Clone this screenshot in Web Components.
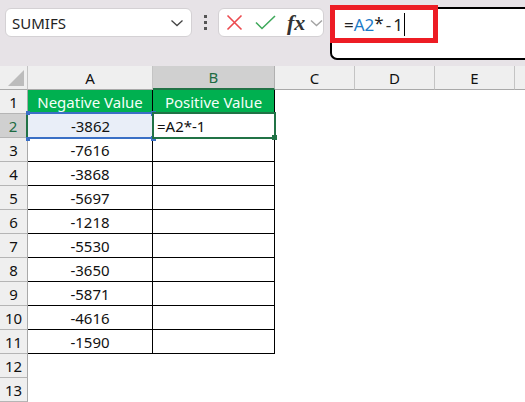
<!DOCTYPE html>
<html>
<head>
<meta charset="utf-8">
<title>SUMIFS</title>
<style>
    html, body { margin: 0; padding: 0; background: #fff; overflow: hidden; }
    body { width: 525px; height: 402px; font-family: "Noto Sans", "Open Sans", sans-serif; }
</style>
</head>
<body>
<excel-window>
    <formula-toolbar slot="toolbar" name="SUMIFS"></formula-toolbar>
    <sheet-grid slot="sheet"></sheet-grid>
</excel-window>

<template id="excel-window-template">
<style>
    :host { display: flex; flex-direction: column; width: 525px; height: 402px; overflow: hidden; }
</style>
<slot name="toolbar"></slot>
<slot name="sheet"></slot>
</template>

<template id="formula-toolbar-template">
<style>
    :host { display: flex; align-items: flex-start; box-sizing: border-box; height: 69px; padding: 8px 0 0 5px; background: #e7e3e7; position: relative; color: #222; }
    .box { background: #fff; border: 1px solid #d4d1d4; border-radius: 6px; box-sizing: border-box; height: 29px; display: flex; align-items: center; }
    .name { width: 187px; padding: 0 7px 0 6px; justify-content: space-between; font-size: 15px; }
    .dots { width: 26px; height: 29px; display: flex; flex-direction: column; align-items: center; justify-content: center; gap: 3px; }
    .dots i { width: 3px; height: 3px; background: #555; display: block; }
    .tools { width: 106px; padding-left: 7px; gap: 12px; }
    .fx { font: italic 700 22px "Liberation Serif", serif; color: #333; width: 22px; margin-left: -1px; line-height: 26px; }
    .chev { margin-left: -8px; }
    .bar { margin: -1px 0 0 6px; flex: 1; height: 53px; box-sizing: border-box; background: #fff; border: 2px solid #000; border-right: none; border-radius: 7px 0 0 7px; padding: 4px 0 0 12px; font-size: 17px; line-height: 24px; white-space: nowrap; }
    .ref { color: #1b7ac7; }
    .op { margin: 0 2px; color: #333; }
    .star { position: relative; top: -2px; }
    .caret { display: inline-block; width: 1px; height: 23px; background: #000; vertical-align: -5px; margin-left: 1px; }
    .mark { position: absolute; left: 330px; top: 5px; width: 108px; height: 38px; box-sizing: border-box; border: 5px solid #ed1c24; }
    svg { display: block; flex: none; }
</style>
<div class="box name"><span id="name"></span>
    <svg width="14" height="8" viewBox="0 0 14 8"><path d="M1.5 1.5 7 6.5 12.5 1.5" fill="none" stroke="#444" stroke-width="1.3"/></svg>
</div>
<div class="dots"><i></i><i></i><i></i></div>
<div class="box tools">
    <svg width="17" height="17" viewBox="0 0 17 17"><path d="M1.5 1.5 15.5 15.5M15.5 1.5 1.5 15.5" fill="none" stroke="#ec4a4f" stroke-width="1.6"/></svg>
    <svg width="21" height="15" viewBox="0 0 21 15"><path d="M1 7.5 7 13.5 20 1" fill="none" stroke="#3fa95b" stroke-width="1.6"/></svg>
    <span class="fx">fx</span>
    <svg class="chev" width="13" height="8" viewBox="0 0 13 8"><path d="M1 1.5 6.5 6.5 12 1.5" fill="none" stroke="#a3a3a3" stroke-width="1.4"/></svg>
</div>
<div class="bar">=<span class="ref">A2</span><span class="star">*</span><span class="op">-</span>1<span class="caret"></span></div>
<div class="mark"></div>
</template>

<template id="sheet-cell-template">
<style>
    :host { display: flex; align-items: center; justify-content: center; box-sizing: border-box; position: relative; font-size: 15px; min-width: 0; white-space: nowrap; color: #111; }
    :host([kind="col"]) { background: #efefef; border-bottom: 1px solid #a9a9a9; border-right: 1px solid #c4c4c4; }
    :host([kind="col"][active]) { background: #d0d0d0; color: #1d6b43; border-bottom: 2px solid #217346; border-right-color: #b0b0b0; }
    :host([kind="row"]) { background: #efefef; border-bottom: 1px solid #b5b5b5; border-right: 1px solid #a9a9a9; }
    :host([kind="row"][active]) { background: #d0d0d0; color: #1d6b43; border-right: 2px solid #217346; }
    :host([kind="head"]) { background: #00b050; color: #f4fff8; border-right: 1px solid #000; }
    :host([kind="data"]) { background: #fff; border-right: 1px solid #000; border-bottom: 1px solid #000; }
    :host([kind="corner"]) { background: #efefef; border-bottom: 1px solid #a9a9a9; border-right: 1px solid #c4c4c4; }
    :host([kind="blank"]) { background: #fff; }
    :host([sel="blue"]) { background: #e9eef8; border: none; z-index: 1; }
    :host([sel="green"]) { justify-content: flex-start; padding-left: 4px; border: none; z-index: 2; }
    :host([sel="green"]) .frame { display: block; position: absolute; left: -1px; top: -2px; right: -1px; bottom: -1px; border: 2px solid #217346; }
    :host([sel="blue"]) .frame { display: block; position: absolute; left: 0; top: -2px; right: 0; bottom: -1px; border-top: 2px solid #3a6fc6; border-bottom: 2px solid #3a6fc6; }
    .frame { display: none; pointer-events: none; }
    .knob { display: none; position: absolute; width: 5px; height: 5px; }
    :host([sel="green"]) .br { display: block; background: #217346; right: -2px; bottom: -2px; }
    :host([sel="blue"]) .knob { display: block; background: #3a6fc6; }
    :host([sel="blue"]) .tl { left: -2px; top: -3px; width: 4px; height: 4px; }
    :host([sel="blue"]) .bl { left: -2px; bottom: -3px; width: 4px; height: 4px; }
    :host([sel="blue"]) .tr { right: -3px; top: -3px; }
    :host([sel="blue"]) .br { right: -3px; bottom: -3px; }
    svg { display: block; }
</style>
<slot></slot>
<span class="frame"></span>
<span class="knob tl"></span><span class="knob tr"></span><span class="knob bl"></span><span class="knob br"></span>
</template>

<template id="sheet-grid-template">
<style>
    :host { display: grid; grid-template-columns: 28px 125px 122px 80px 80px 80px 50px; grid-auto-rows: 24px; background: #fff; }
</style>
<slot></slot>
</template>

<script>
const negativeValues = [-3862, -7616, -3868, -5697, -1218, -5530, -3650, -5871, -4616, -1590];

class ExcelWindow extends HTMLElement {
    constructor() {
        super();
        this.attachShadow({ mode: "open" });
    }
    connectedCallback() {
        this.shadowRoot.appendChild(document.getElementById('excel-window-template').content.cloneNode(true));
    }
}

class FormulaToolbar extends HTMLElement {
    constructor() {
        super();
        this.attachShadow({ mode: "open" });
    }
    connectedCallback() {
        const clone = document.getElementById('formula-toolbar-template').content.cloneNode(true);
        clone.querySelector('#name').textContent = this.getAttribute('name');
        this.shadowRoot.appendChild(clone);
    }
}

class SheetCell extends HTMLElement {
    constructor() {
        super();
        this.attachShadow({ mode: "open" });
    }
    connectedCallback() {
        this.shadowRoot.appendChild(document.getElementById('sheet-cell-template').content.cloneNode(true));
        if (this.getAttribute('kind') === 'corner') {
            // triangulo gris de seleccionar todo
            this.shadowRoot.querySelector('slot').innerHTML = '';
            const ns = 'http://www.w3.org/2000/svg';
            const svg = document.createElementNS(ns, 'svg');
            svg.setAttribute('width', '16');
            svg.setAttribute('height', '16');
            svg.style.cssText = 'position:absolute;left:8px;top:4px';
            const path = document.createElementNS(ns, 'path');
            path.setAttribute('d', 'M16 0V16H0Z');
            path.setAttribute('fill', '#bcbcbc');
            svg.appendChild(path);
            this.shadowRoot.appendChild(svg);
        }
    }
}

class SheetGrid extends HTMLElement {
    constructor() {
        super();
        this.attachShadow({ mode: "open" });
    }
    addCell(kind, text, extra) {
        const cell = document.createElement('sheet-cell');
        cell.setAttribute('kind', kind);
        if (text !== undefined) cell.textContent = text;
        for (const key in extra) cell.setAttribute(key, extra[key]);
        this.appendChild(cell);
    }
    connectedCallback() {
        this.shadowRoot.appendChild(document.getElementById('sheet-grid-template').content.cloneNode(true));
        this.addCell('corner');
        ['A', 'B', 'C', 'D', 'E', ''].forEach((col) => {
            this.addCell('col', col, col === 'B' ? { active: '' } : {});
        });
        for (let row = 1; row <= 13; row++) {
            this.addCell('row', String(row), row === 2 ? { active: '' } : {});
            if (row === 1) {
                this.addCell('head', 'Negative Value');
                this.addCell('head', 'Positive Value');
            } else if (row === 2) {
                this.addCell('data', String(negativeValues[0]), { sel: 'blue' });
                this.addCell('data', '=A2*-1', { sel: 'green' });
            } else if (row <= 11) {
                this.addCell('data', String(negativeValues[row - 2]));
                this.addCell('data');
            } else {
                this.addCell('blank');
                this.addCell('blank');
            }
            for (let i = 0; i < 4; i++) this.addCell('blank');
        }
    }
}

customElements.define('sheet-cell', SheetCell);
customElements.define('sheet-grid', SheetGrid);
customElements.define('formula-toolbar', FormulaToolbar);
customElements.define('excel-window', ExcelWindow);
</script>
</body>
</html>
